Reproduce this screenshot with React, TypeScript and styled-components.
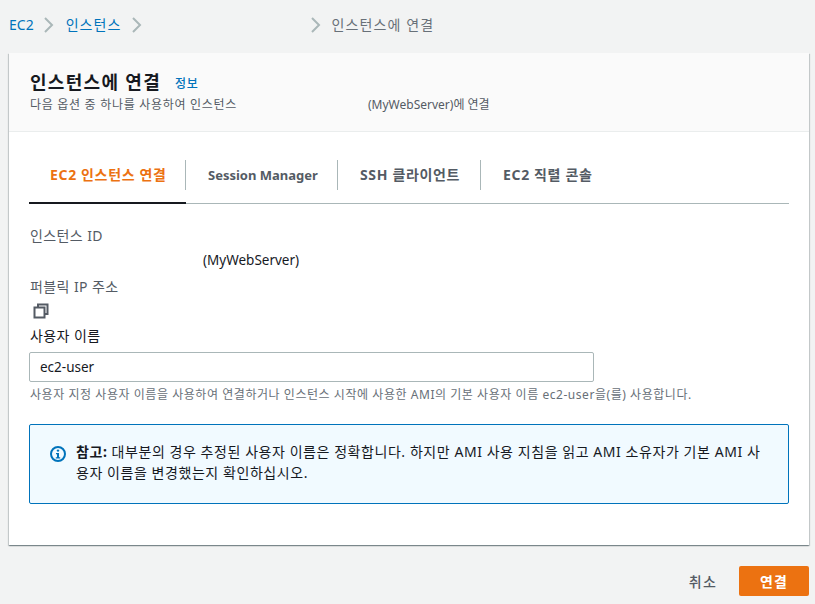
import React from 'react';
import styled, { createGlobalStyle } from 'styled-components';

const GlobalStyle = createGlobalStyle`
    html, body {
        margin: 0;
        padding: 0;
        background: #f2f3f3;
        font-family: "Noto Sans", "Noto Sans CJK KR", sans-serif;
        color: #16191f;
    }
`;

const Page = styled.div`
    width: 815px;
    height: 604px;
    overflow: hidden;
    display: flex;
    flex-direction: column;
    padding: 0 6px 0 9px;
    box-sizing: border-box;
`;

const Breadcrumbs = styled.nav`
    height: 53px;
    display: flex;
    align-items: flex-start;
    padding-top: 15px;
    box-sizing: border-box;
    font-size: 14px;
    line-height: 20px;
`;

const Crumb = styled.a<{ $muted?: boolean; $spaced?: boolean }>`
    color: ${(p) => (p.$muted ? '#687078' : '#0073bb')};
    letter-spacing: ${(p) => (p.$spaced ? '1.1px' : '0')};
`;

const Chevron = styled.svg<{ $after: number }>`
    width: 11px;
    height: 16px;
    margin: 2px ${(p) => p.$after}px 0 9px;
    fill: none;
    stroke: #aab7b8;
    stroke-width: 2;
`;

const Card = styled.main`
    width: 800px;
    height: 492px;
    background: #fff;
    box-shadow: 0 1px 1px 0 rgba(0, 28, 36, 0.3), 1px 1px 1px 0 rgba(0, 28, 36, 0.15),
        -1px 1px 1px 0 rgba(0, 28, 36, 0.15);
    display: flex;
    flex-direction: column;
`;

const CardHeader = styled.header`
    height: 79px;
    box-sizing: border-box;
    background: #fafafa;
    border-bottom: 1px solid #eaeded;
    padding: 15px 20px 0 21px;
`;

const TitleRow = styled.div`
    display: flex;
    align-items: center;
    height: 28px;
`;

const Title = styled.h1`
    margin: 0;
    font-size: 18px;
    font-weight: 700;
    line-height: 28px;
    letter-spacing: 1.3px;
`;

const InfoLink = styled.a`
    margin-left: 14px;
    margin-top: 2px;
    font-size: 12px;
    font-weight: 500;
    letter-spacing: 0.8px;
    color: #0073bb;
`;

const Subtitle = styled.p`
    margin: 1px 0 0;
    display: flex;
    font-size: 12px;
    line-height: 16px;
    color: #545b64;
`;

const SubtitleLead = styled.span`
    width: 338px;
    letter-spacing: 0.7px;
`;

const CardBody = styled.div`
    flex: 1;
    padding: 21px 20px 0 20px;
    display: flex;
    flex-direction: column;
`;

const Tabs = styled.div`
    display: flex;
    height: 50px;
    border-bottom: 1px solid #aab7b8;
`;

const Tab = styled.div<{ $active?: boolean; $width: number; $latin?: boolean; $last?: boolean }>`
    width: ${(p) => p.$width}px;
    box-sizing: border-box;
    height: 51px;
    font-size: ${(p) => (p.$latin ? '13px' : '14px')};
    font-weight: 700;
    line-height: 20px;
    letter-spacing: ${(p) => (p.$latin ? '0' : '0.65px')};
    color: ${(p) => (p.$active ? '#ec7211' : '#545b64')};
    border-bottom: 2px solid ${(p) => (p.$active ? '#16191f' : 'transparent')};
    position: relative;
    padding: 12px 0 0 ${(p) => (p.$active ? 21 : 22)}px;
    white-space: nowrap;

    &::after {
        content: '';
        display: ${(p) => (p.$last ? 'none' : 'block')};
        position: absolute;
        right: 0;
        top: 7px;
        height: 30px;
        width: 1px;
        background: #aab7b8;
    }
`;

const Details = styled.div`
    margin-top: 22px;
    padding-left: 1px;
`;

const Label = styled.div<{ $strong?: boolean }>`
    font-size: 14px;
    line-height: 20px;
    letter-spacing: 0.4px;
    color: ${(p) => (p.$strong ? '#16191f' : '#545b64')};
`;

const ServerName = styled.div`
    padding-left: 173px;
    margin: 4px 0 7px;
    font-size: 13.5px;
    line-height: 20px;
`;

const CopyIcon = styled.svg`
    display: block;
    width: 16px;
    height: 16px;
    margin: 6px 0 7px 3px;
    fill: none;
    stroke: #545b64;
    stroke-width: 2;
`;

const TextInput = styled.input`
    display: block;
    width: 565px;
    height: 30px;
    box-sizing: border-box;
    margin: 6px 0 0 -1px;
    padding: 0 10px;
    border: 1px solid #aab7b8;
    border-radius: 2px;
    background: #fff;
    font: inherit;
    font-size: 13.5px;
    color: #16191f;
    outline: none;
`;

const Hint = styled.p`
    margin: 5px 0 0;
    font-size: 12px;
    line-height: 16px;
    letter-spacing: 0.55px;
    color: #687078;
    white-space: nowrap;
`;

const Notice = styled.aside`
    margin-top: 21px;
    width: 760px;
    height: 80px;
    box-sizing: border-box;
    display: flex;
    gap: 10px;
    padding: 16px 20px 0 20px;
    background: #f1faff;
    border: 1px solid #0073bb;
    border-radius: 2px;
    font-size: 14px;
    line-height: 21px;
    letter-spacing: 0.56px;
`;

const NoticeIcon = styled.svg`
    flex: none;
    width: 16px;
    height: 16px;
    margin-top: 5px;
`;

const NoticeText = styled.p`
    margin: 0;
    b {
        font-weight: 700;
    }
`;

const Footer = styled.footer`
    flex: 1;
    display: flex;
    justify-content: flex-end;
    align-items: flex-start;
    padding-top: 21px;
`;

const CancelButton = styled.button`
    border: 0;
    background: none;
    height: 30px;
    padding: 0;
    margin-right: 22px;
    font: inherit;
    font-size: 14px;
    font-weight: 500;
    letter-spacing: 1.2px;
    color: #545b64;
`;

const PrimaryButton = styled.button`
    border: 0;
    width: 70px;
    height: 30px;
    border-radius: 2px;
    background: #ec7211;
    color: #fff;
    font: inherit;
    font-size: 14px;
    font-weight: 700;
    letter-spacing: 1.2px;
`;

function BreadcrumbChevron({ after }: { after: number }) {
    return (
        <Chevron $after={after} viewBox="0 0 11 16">
            <path d="M2 1l7 7-7 7" />
        </Chevron>
    );
}

export default function App() {
    return (
        <>
            <GlobalStyle />
            <Page>
                <Breadcrumbs>
                    <Crumb>EC2</Crumb>
                    <BreadcrumbChevron after={12} />
                    <Crumb $spaced>인스턴스</Crumb>
                    <BreadcrumbChevron after={159} />
                    <BreadcrumbChevron after={11} />
                    <Crumb $muted $spaced>인스턴스에 연결</Crumb>
                </Breadcrumbs>
                <Card>
                    <CardHeader>
                        <TitleRow>
                            <Title>인스턴스에 연결</Title>
                            <InfoLink>정보</InfoLink>
                        </TitleRow>
                        <Subtitle>
                            <SubtitleLead>다음 옵션 중 하나를 사용하여 인스턴스</SubtitleLead>
                            <span>(MyWebServer)에 연결</span>
                        </Subtitle>
                    </CardHeader>
                    <CardBody>
                        <Tabs>
                            <Tab $active $width={157}>EC2 인스턴스 연결</Tab>
                            <Tab $latin $width={152}>Session Manager</Tab>
                            <Tab $width={143}>SSH 클라이언트</Tab>
                            <Tab $width={108} $last>EC2 직렬 콘솔</Tab>
                        </Tabs>
                        <Details>
                            <Label>인스턴스 ID</Label>
                            <ServerName>(MyWebServer)</ServerName>
                            <Label>퍼블릭 IP 주소</Label>
                            <CopyIcon viewBox="0 0 16 16">
                                <path d="M5 4V1.5h9.5V11H12" />
                                <rect x="1.5" y="4.5" width="10" height="10" />
                            </CopyIcon>
                            <Label $strong>사용자 이름</Label>
                            <TextInput defaultValue="ec2-user" readOnly />
                            <Hint>
                                사용자 지정 사용자 이름을 사용하여 연결하거나 인스턴스 시작에 사용한 AMI의 기본 사용자 이름 ec2-user을(를) 사용합니다.
                            </Hint>
                        </Details>
                        <Notice>
                            <NoticeIcon viewBox="0 0 16 16">
                                <circle cx="8" cy="8" r="7" fill="none" stroke="#0073bb" strokeWidth="2" />
                                <circle cx="8" cy="4.6" r="1.2" fill="#0073bb" />
                                <path d="M6 7h3v4.2h1.2v1.3H5.8v-1.3H7V8.2H6z" fill="#0073bb" />
                            </NoticeIcon>
                            <NoticeText>
                                <b>참고:</b> 대부분의 경우 추정된 사용자 이름은 정확합니다. 하지만 AMI 사용 지침을 읽고 AMI 소유자가 기본 AMI 사용자 이름을 변경했는지 확인하십시오.
                            </NoticeText>
                        </Notice>
                    </CardBody>
                </Card>
                <Footer>
                    <CancelButton>취소</CancelButton>
                    <PrimaryButton>연결</PrimaryButton>
                </Footer>
            </Page>
        </>
    );
}
